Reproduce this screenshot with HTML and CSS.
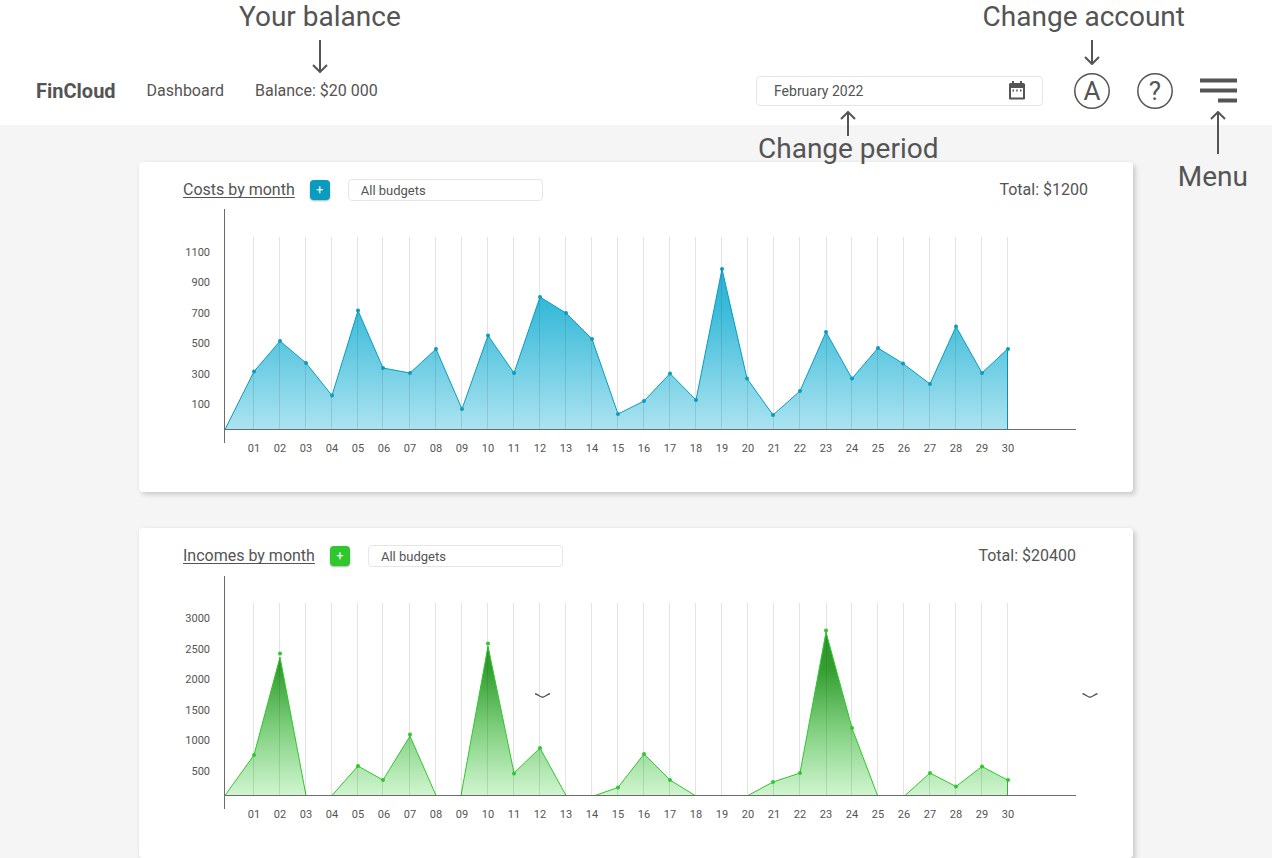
FILE: index.html
```html
<!DOCTYPE html>
<html lang="en">
<head>
  <meta charset="utf-8">
  <meta name="viewport" content="width=device-width, initial-scale=1">
  <title>FinCloud – Dashboard</title>
  <link rel="stylesheet" href="styles.css">
</head>
<body>
  <header class="topbar">
    <nav class="nav">
      <a class="brand" href="#">FinCloud</a>
      <a class="nav-link" href="#">Dashboard</a>
      <div class="slot">
        <span class="nav-link">Balance: $20 000</span>
        <div class="note note-balance">
          <span>Your balance</span>
          <svg class="arrow" width="16" height="33" viewBox="0 0 16 33"><path d="M8 0V31M1 25L8 32L15 25"/></svg>
        </div>
      </div>
    </nav>

    <div class="tools">
      <div class="slot slot-period">
        <label class="period">
          <input class="period-input" type="text" value="February 2022" aria-label="Period">
          <svg class="calendar" width="18" height="20" viewBox="0 0 18 20">
            <path class="calendar-box" d="M2 4H16V17.500H2Z"/>
            <path class="calendar-top" d="M1 3.500Q1 2 2.500 2H4V0H6V2H12V0H14V2H15.500Q17 2 17 3.500V7H1Z"/>
            <path class="calendar-dots" d="M4.500 9.500H6M8.200 9.500H9.700M12 9.500H13.500"/>
          </svg>
        </label>
        <div class="note note-period">
          <svg class="arrow" width="16" height="25" viewBox="0 0 16 25"><path d="M8 25V2M1 8L8 1L15 8"/></svg>
          <span>Change period</span>
        </div>
      </div>

      <div class="slot">
        <button class="round" type="button" aria-label="Account">
          <svg class="ring" viewBox="0 0 36 36"><circle cx="18" cy="18" r="17.200"/></svg>
          <span>A</span>
        </button>
        <div class="note note-account">
          <span>Change account</span>
          <svg class="arrow" width="16" height="25" viewBox="0 0 16 25"><path d="M8 0V23M1 17L8 24L15 17"/></svg>
        </div>
      </div>

      <button class="round" type="button" aria-label="Help">
        <svg class="ring" viewBox="0 0 36 36"><circle cx="18" cy="18" r="17.200"/></svg>
        <span>?</span>
      </button>

      <div class="slot">
        <button class="menu" type="button" aria-label="Menu">
          <svg width="37" height="26" viewBox="0 0 37 26"><path d="M0 2.500H37M0 12.500H37M18 22.500H37"/></svg>
        </button>
        <div class="note note-menu">
          <svg class="arrow" width="16" height="43" viewBox="0 0 16 43"><path d="M8 43V2M1 8L8 1L15 8"/></svg>
          <span>Menu</span>
        </div>
      </div>
    </div>
  </header>

  <main class="board">
    <section class="card costs">
      <div class="card-head">
        <h2 class="card-title"><a href="#">Costs by month</a></h2>
        <button class="add" type="button" aria-label="Add cost">+</button>
        <select class="budget" aria-label="Cost budget"><option>All budgets</option></select>
        <span class="total">Total: $1200</span>
      </div>
      <svg class="chart" viewBox="0 0 906 270" role="img" aria-label="Costs by day">
        <defs>
          <linearGradient id="costs-fill" gradientUnits="userSpaceOnUse" x1="0" y1="64" x2="0" y2="224">
            <stop offset="0" stop-color="#27b1d3"/>
            <stop offset="0.250" stop-color="#3bbbd9"/>
            <stop offset="1" stop-color="#abe3f0"/>
          </linearGradient>
        </defs>
        <path class="area" fill="url(#costs-fill)" d="M42 224.500L71 166.500L97 136L123 158L149 190.500L175 105.500L200 163L227 168L253 144L279 204L305 130.500L331 168L357 92L383 108L409 134L435 209L461 196L487 168.500L513 195L539 64L564 173.500L590 210L617 186L643 127L669 173.500L695 143L720 158.500L747 179L773 121.500L799 168L824.500 144V224.500Z"/>
        <path class="grid" d="M70.500 32V224M96.500 32V224M122.500 32V224M148.500 32V224M174.500 32V224M199.500 32V224M226.500 32V224M252.500 32V224M278.500 32V224M304.500 32V224M330.500 32V224M356.500 32V224M382.500 32V224M408.500 32V224M434.500 32V224M460.500 32V224M486.500 32V224M512.500 32V224M538.500 32V224M564.500 32V224M590.500 32V224M616.500 32V224M643.500 32V224M668.500 32V224M694.500 32V224M720.500 32V224M746.500 32V224M772.500 32V224M798.500 32V224M824.500 32V224"/>
        <path class="dots" d="M71 166.500h0M97 136h0M123 158h0M149 190.500h0M175 105.500h0M200 163h0M227 168h0M253 144h0M279 204h0M305 130.500h0M331 168h0M357 92h0M383 108h0M409 134h0M435 209h0M461 196h0M487 168.500h0M513 195h0M539 64h0M564 173.500h0M590 210h0M617 186h0M643 127h0M669 173.500h0M695 143h0M720 158.500h0M747 179h0M773 121.500h0M799 168h0M825 144h0"/>
        <path class="axis" d="M41.500 4V238M41 224.500H893"/>
        <g class="labels-y">
          <text x="27" y="51">1100</text><text x="27" y="81">900</text><text x="27" y="112">700</text>
          <text x="27" y="142">500</text><text x="27" y="173">300</text><text x="27" y="203">100</text>
        </g>
        <g class="labels-x">
          <text x="71" y="247">01</text><text x="97" y="247">02</text><text x="123" y="247">03</text><text x="149" y="247">04</text><text x="175" y="247">05</text>
          <text x="201" y="247">06</text><text x="227" y="247">07</text><text x="253" y="247">08</text><text x="279" y="247">09</text><text x="305" y="247">10</text>
          <text x="331" y="247">11</text><text x="357" y="247">12</text><text x="383" y="247">13</text><text x="409" y="247">14</text><text x="435" y="247">15</text>
          <text x="461" y="247">16</text><text x="487" y="247">17</text><text x="513" y="247">18</text><text x="539" y="247">19</text><text x="565" y="247">20</text>
          <text x="591" y="247">21</text><text x="617" y="247">22</text><text x="643" y="247">23</text><text x="669" y="247">24</text><text x="695" y="247">25</text>
          <text x="721" y="247">26</text><text x="747" y="247">27</text><text x="773" y="247">28</text><text x="799" y="247">29</text><text x="825" y="247">30</text>
        </g>
      </svg>
    </section>

    <section class="card incomes">
      <div class="card-head">
        <h2 class="card-title"><a href="#">Incomes by month</a></h2>
        <button class="add" type="button" aria-label="Add income">+</button>
        <select class="budget" aria-label="Income budget"><option>All budgets</option></select>
        <span class="total">Total: $20400</span>
      </div>
      <svg class="chart" viewBox="0 0 906 270" role="img" aria-label="Incomes by day">
        <defs>
          <linearGradient id="incomes-fill" gradientUnits="userSpaceOnUse" x1="0" y1="60" x2="0" y2="224">
            <stop offset="0" stop-color="#2c952a"/>
            <stop offset="0.230" stop-color="#349e30"/>
            <stop offset="0.600" stop-color="#80d07f"/>
            <stop offset="1" stop-color="#d0f5d0"/>
          </linearGradient>
        </defs>
        <path class="area" fill="url(#incomes-fill)" d="M42 224.500L71 184L97 86L123 224.500H149L175 195L200 209L227 165L253 224.500H278L305 75L331 202L357 177L383 224.500H412L435 216.500L461 183L487 209L512 224.500H565L590 211L617 202L643 61L669 157L694.500 224.500H722L747 202L773 215.500L799 195.500L824.500 209V224.500Z"/>
        <path class="grid" d="M70.500 32V224M96.500 32V224M122.500 32V224M148.500 32V224M174.500 32V224M199.500 32V224M226.500 32V224M252.500 32V224M278.500 32V224M304.500 32V224M330.500 32V224M356.500 32V224M382.500 32V224M408.500 32V224M434.500 32V224M460.500 32V224M486.500 32V224M512.500 32V224M538.500 32V224M564.500 32V224M590.500 32V224M616.500 32V224M643.500 32V224M668.500 32V224M694.500 32V224M720.500 32V224M746.500 32V224M772.500 32V224M798.500 32V224M824.500 32V224"/>
        <path class="dots" d="M71 184h0M97 82.500h0M175 195h0M200 209h0M227 163.500h0M305 72.500h0M331 202.500h0M357 177h0M435 216.500h0M461 183h0M487 209h0M590 211h0M617 202h0M643 59.500h0M669 157h0M747 202h0M773 215.500h0M799 195.500h0M825 209h0"/>
        <path class="axis" d="M41.500 5V238M41 224.500H893"/>
        <path class="chevron" d="M352 122.800C354.500 122.800 357 126.200 359.500 126.200S364.500 122.800 367 122.800M899.500 122.800C902 122.800 904.500 126.200 907 126.200S912 122.800 914.500 122.800"/>
        <g class="labels-y">
          <text x="27" y="51">3000</text><text x="27" y="82">2500</text><text x="27" y="112">2000</text>
          <text x="27" y="143">1500</text><text x="27" y="173">1000</text><text x="27" y="204">500</text>
        </g>
        <g class="labels-x">
          <text x="71" y="247">01</text><text x="97" y="247">02</text><text x="123" y="247">03</text><text x="149" y="247">04</text><text x="175" y="247">05</text>
          <text x="201" y="247">06</text><text x="227" y="247">07</text><text x="253" y="247">08</text><text x="279" y="247">09</text><text x="305" y="247">10</text>
          <text x="331" y="247">11</text><text x="357" y="247">12</text><text x="383" y="247">13</text><text x="409" y="247">14</text><text x="435" y="247">15</text>
          <text x="461" y="247">16</text><text x="487" y="247">17</text><text x="513" y="247">18</text><text x="539" y="247">19</text><text x="565" y="247">20</text>
          <text x="591" y="247">21</text><text x="617" y="247">22</text><text x="643" y="247">23</text><text x="669" y="247">24</text><text x="695" y="247">25</text>
          <text x="721" y="247">26</text><text x="747" y="247">27</text><text x="773" y="247">28</text><text x="799" y="247">29</text><text x="825" y="247">30</text>
        </g>
      </svg>
    </section>
  </main>
</body>
</html>
```
FILE: styles.css
```css
* {
  box-sizing: border-box;
}

body {
  margin: 0;
  background: #f5f5f5;
  color: #545454;
  font-family: Roboto, "Liberation Sans", sans-serif;
  font-size: 16px;
}

a {
  color: inherit;
  text-decoration: none;
}

button,
input,
select {
  font-family: inherit;
  color: inherit;
}

/* Top bar */
.topbar {
  position: relative;
  z-index: 1;
  display: flex;
  justify-content: space-between;
  padding: 73px 35px 16px 36px;
  background: #fff;
}

.nav,
.tools {
  display: flex;
  align-items: center;
  height: 36px;
}

.nav {
  gap: 31px;
  line-height: 20px;
}

.tools {
  gap: 27px;
}

.brand {
  font-size: 20px;
  font-weight: 700;
}

.slot {
  position: relative;
  display: flex;
  align-items: center;
  height: 36px;
}

.slot-period {
  margin-right: 4px;
}

.period {
  display: flex;
  align-items: center;
  justify-content: space-between;
  width: 287px;
  height: 30px;
  padding: 0 16px 0 17px;
  border: 1px solid #e6e6e6;
  border-radius: 4px;
  background: #fff;
}

.period-input {
  flex: 1;
  min-width: 0;
  padding: 0;
  border: 0;
  outline: 0;
  background: none;
  font-size: 14px;
}

.calendar-box {
  fill: none;
  stroke: #545454;
  stroke-width: 2;
  stroke-linejoin: round;
}

.calendar-top {
  fill: #545454;
}

.calendar-dots {
  stroke: #545454;
  stroke-width: 2;
}

.round {
  display: grid;
  place-items: center;
  width: 36px;
  height: 36px;
  padding: 0;
  border: 0;
  background: none;
  font-size: 26px;
  line-height: 36px;
}

.round > * {
  grid-area: 1 / 1;
}

.ring {
  width: 36px;
  height: 36px;
  fill: none;
  stroke: #545454;
  stroke-width: 1.5;
}

.menu {
  display: flex;
  padding: 0;
  border: 0;
  background: none;
}

.menu svg path {
  stroke: #545454;
  stroke-width: 4;
}

/* Callouts */
.note {
  position: absolute;
  display: flex;
  flex-direction: column;
  align-items: center;
  width: max-content;
  font-size: 28px;
  line-height: 32px;
}

.arrow {
  fill: none;
  stroke: #545454;
  stroke-width: 2;
}

.note-balance {
  bottom: 100%;
  left: -16px;
  gap: 7px;
}

.note-account {
  right: -75px;
  bottom: calc(100% + 8px);
  gap: 7px;
}

.note-account .arrow {
  margin-left: 17px;
}

.note-period {
  top: calc(100% + 2px);
  left: 2px;
}

.note-period span {
  margin-top: -3px;
}

.note-menu {
  top: calc(100% + 2px);
  right: -11px;
  gap: 7px;
}

.note-menu .arrow {
  margin-left: 10px;
}

/* Cards */
.board {
  display: grid;
  gap: 36px;
  max-width: 994px;
  margin: 0 auto;
  padding-top: 37px;
}

.card {
  padding: 17px 44px 0;
  border-radius: 4px;
  background: #fff;
  box-shadow: 0 0 4px rgba(0, 0, 0, 0.05), 3px 3px 5px rgba(0, 0, 0, 0.15);
}

.costs {
  --accent: #0a9cbf;
}

.incomes {
  --accent: #2fc72d;
}

.card-head {
  display: flex;
  align-items: center;
  height: 22px;
}

.card-title,
.total {
  padding-bottom: 2px;
}

.card-title {
  margin: 0;
  font-size: 16px;
  font-weight: 400;
}

.card-title a {
  text-decoration: underline;
  text-decoration-thickness: 1px;
  text-decoration-skip-ink: none;
  text-underline-offset: 2px;
}

.add {
  width: 20px;
  height: 20px;
  margin: 0 18px 0 15px;
  padding: 0;
  border: 0;
  border-radius: 4px;
  background: var(--accent);
  box-shadow: 0 1px 2px rgba(0, 0, 0, 0.3);
  color: #fff;
  font-size: 12px;
  line-height: 20px;
}

.budget {
  width: 195px;
  height: 22px;
  padding: 0 12px;
  border: 1px solid #e6e6e6;
  border-radius: 4px;
  background: #fff;
  font-size: 13px;
  appearance: none;
}

.total {
  margin-left: auto;
  margin-right: 1px;
}

.incomes .total {
  margin-right: 13px;
}

/* Charts */
.chart {
  display: block;
  width: 100%;
  margin-top: 4px;
  padding-bottom: 17px;
  overflow: visible;
}

.area {
  stroke: var(--accent);
  stroke-width: 1;
}

.grid {
  stroke: rgba(60, 60, 60, 0.14);
}

.dots {
  stroke: var(--accent);
  stroke-width: 4;
  stroke-linecap: round;
}

.axis {
  stroke: #6b6b6b;
}

.chevron {
  fill: none;
  stroke: #545454;
  stroke-width: 1.4;
}

.labels-y text,
.labels-x text {
  fill: #545454;
  font-size: 11px;
}

.labels-y text {
  text-anchor: end;
}

.labels-x text {
  text-anchor: middle;
}
```
